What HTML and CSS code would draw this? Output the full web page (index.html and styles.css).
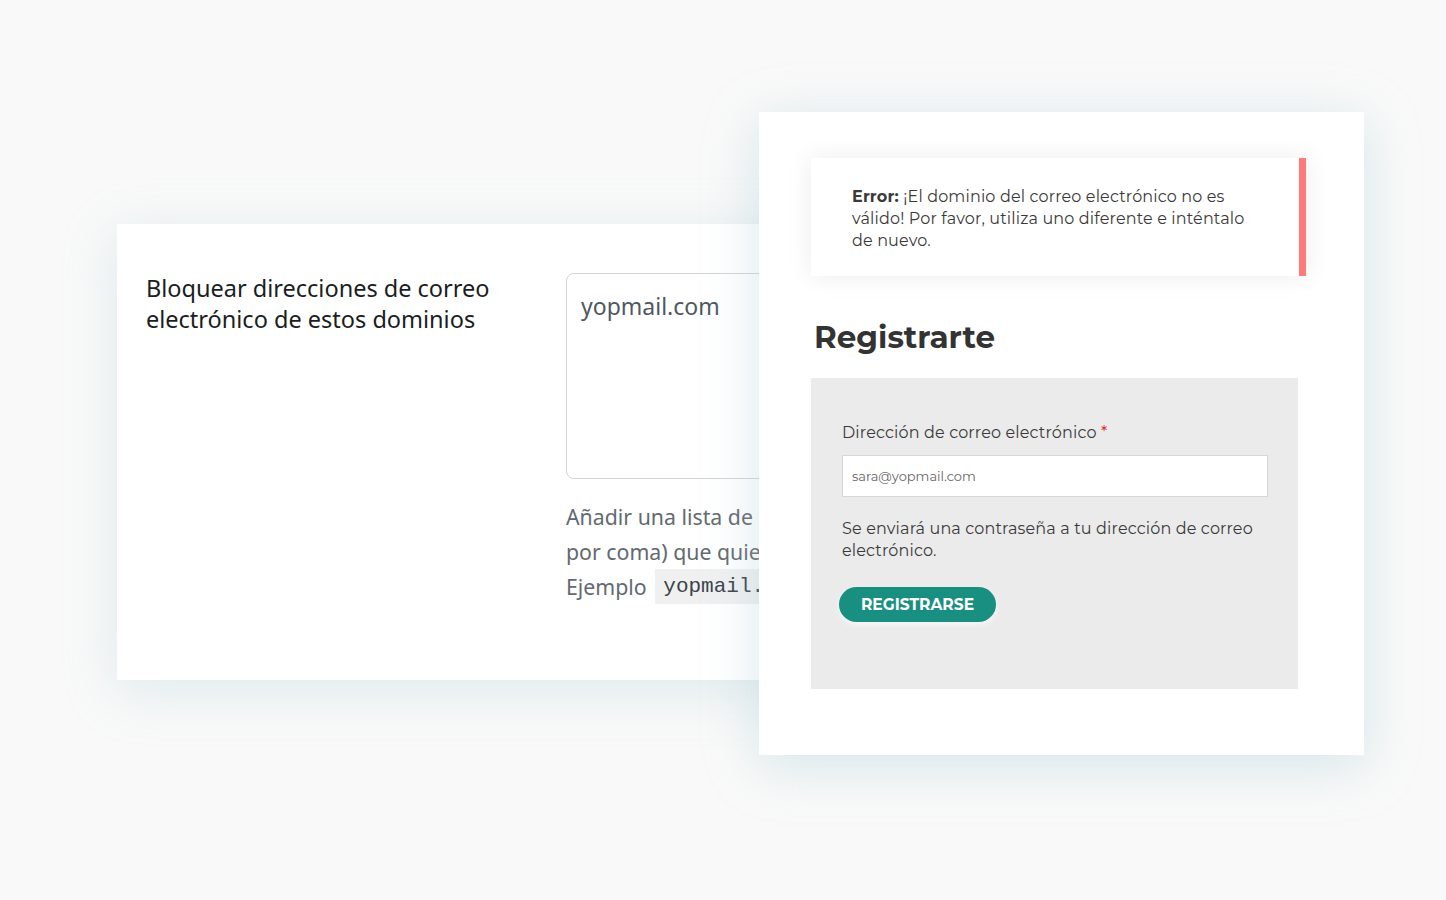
FILE: index.html
```html
<!DOCTYPE html>
<html lang="es">
<head>
  <meta charset="UTF-8" />
  <meta name="viewport" content="width=device-width, initial-scale=1.0"/>
  <title>Bloquear dominios</title>
  <link rel="stylesheet" href="styles.css">
</head>
<body>
  <div class="stage">
    <section class="settings-card">
      <h2 class="settings-title">Bloquear direcciones de correo electrónico de estos dominios</h2>
      <div class="settings-field">
        <textarea class="domain-list">yopmail.com</textarea>
        <p class="field-help">Añadir una lista de dominios (separados<br>por coma) que quieres bloquear.<br>Ejemplo <code>yopmail.com</code></p>
      </div>
    </section>

    <section class="register-card">
      <div class="error-notice">
        <strong>Error:</strong> ¡El dominio del correo electrónico no es válido! Por favor, utiliza uno diferente e inténtalo de nuevo.
      </div>

      <h1 class="register-title">Registrarte</h1>

      <form class="register-form">
        <label for="email">Dirección de correo electrónico <span class="required">*</span></label>
        <input type="email" id="email" placeholder="sara@yopmail.com" />
        <p class="register-note">Se enviará una contraseña a tu dirección de correo electrónico.</p>
        <button type="button" class="register-btn">REGISTRARSE</button>
      </form>
    </section>
  </div>
</body>
</html>
```

FILE: styles.css
```css
body {
  margin: 0;
  background: #f9f9f9;
}
.stage {
  position: relative;
  width: 1446px;
  height: 900px;
  overflow: hidden;
}

/* left: admin setting */
.settings-card {
  position: absolute;
  left: 117px;
  top: 224px;
  width: 720px;
  height: 456px;
  box-sizing: border-box;
  padding: 49px 0 0 29px;
  background: #fff;
  box-shadow: 0 10px 50px rgba(160, 200, 210, 0.3);
  display: grid;
  grid-template-columns: 420px 1fr;
  font-family: "Noto Sans", "Open Sans", sans-serif;
}
.settings-title {
  margin: 0;
  font-size: 23.5px;
  font-weight: 400;
  line-height: 31px;
  color: #1a1e22;
}
.domain-list {
  display: block;
  width: 400px;
  height: 206px;
  box-sizing: border-box;
  padding: 16px 14px;
  border: 1px solid #d4d4d4;
  border-radius: 8px;
  font-family: "Noto Sans", "Open Sans", sans-serif;
  font-size: 23px;
  color: #50575e;
  resize: none;
}
.field-help {
  margin: 20px 0 0;
  font-size: 21.3px;
  line-height: 35px;
  color: #646970;
  white-space: nowrap;
}
.field-help code {
  display: inline-block;
  margin-left: 3px;
  padding: 0 8px;
  background: #f0f0f1;
  font-family: "Liberation Mono", monospace;
  font-size: 21px;
  line-height: 35px;
  color: #3c434a;
  vertical-align: 3px;
}

/* right: register form */
.register-card {
  position: absolute;
  left: 759px;
  top: 112px;
  width: 605px;
  height: 643px;
  box-sizing: border-box;
  padding: 46px 0 0 52px;
  background: #fff;
  box-shadow: 0 10px 50px rgba(160, 200, 210, 0.4);
  font-family: "Montserrat", "Inter", sans-serif;
  color: #3a3a3a;
}
.error-notice {
  width: 495px;
  box-sizing: border-box;
  padding: 28px 37px 24px 41px;
  border-right: 7px solid #ff7b7b;
  background: #fff;
  box-shadow: 0 0 25px rgba(0, 0, 0, 0.08);
  font-size: 16px;
  letter-spacing: 0.15px;
  line-height: 22px;
}
.error-notice strong {
  font-weight: 700;
}
.register-title {
  margin: 41px 0 21px 3px;
  font-size: 31px;
  font-weight: 700;
  line-height: 40px;
  color: #333;
}
.register-form {
  width: 487px;
  height: 311px;
  box-sizing: border-box;
  padding: 44px 30px 0 31px;
  background: #ebebeb;
}
.register-form label {
  display: block;
  font-size: 16px;
  letter-spacing: 0.15px;
  line-height: 22px;
}
.required {
  color: #e2231a;
}
.register-form input {
  display: block;
  width: 426px;
  height: 42px;
  box-sizing: border-box;
  margin-top: 11px;
  padding: 0 9px;
  border: 1px solid #d6d6d6;
  background: #fff;
  font-family: "Montserrat", "Inter", sans-serif;
  font-size: 13px;
}
.register-form input::placeholder {
  color: #666;
}
.register-note {
  margin: 21px 0 0;
  font-size: 16px;
  letter-spacing: 0.15px;
  line-height: 22px;
}
.register-btn {
  display: block;
  margin: 25px 0 0 -3px;
  width: 157px;
  height: 35px;
  border: none;
  border-radius: 18px;
  background: #198f81;
  color: #fff;
  font-family: "Montserrat", "Inter", sans-serif;
  font-size: 15.5px;
  font-weight: 700;
  cursor: pointer;
  box-shadow: 0 3px 6px rgba(255, 255, 255, 0.6);
}
```
